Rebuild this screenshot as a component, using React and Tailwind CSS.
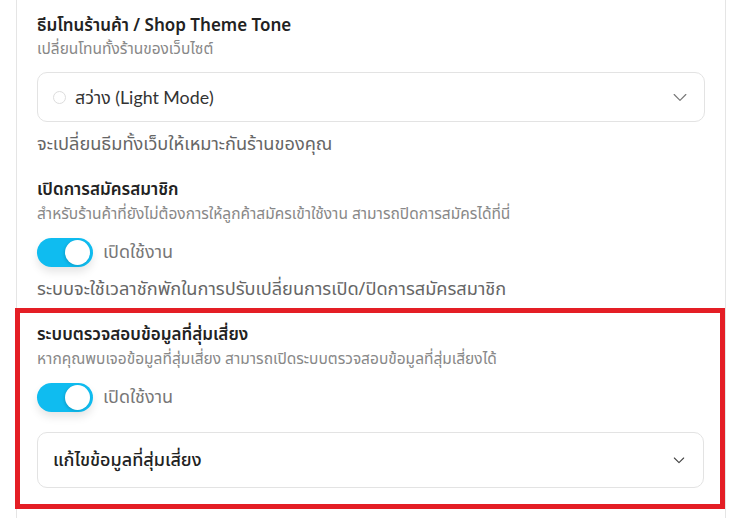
import React from "react";

function Chevron({ size = 18, color = "#777", sw = 1.4 }) {
  return (
    <svg width={size} height={size} viewBox="0 0 24 24" fill="none" stroke={color} strokeWidth={sw} strokeLinecap="round" strokeLinejoin="round">
      <path d="M5 9l7 7 7-7" />
    </svg>
  );
}

function Toggle() {
  return (
    <div className="flex items-center h-[29px]">
      <div className="w-[56px] h-[29px] rounded-full bg-[#0fbcf0] flex items-center justify-end pr-[3px] shadow-[0_5px_9px_rgba(0,0,0,0.10)]">
        <div className="w-[25px] h-[25px] rounded-full bg-white shadow-[-1px_1px_3px_rgba(0,0,0,0.15)]" />
      </div>
      <span className="ml-[10px] text-[18px] leading-6 text-[#777]">เปิดใช้งาน</span>
    </div>
  );
}

export default function App() {
  return (
    <div className="w-[743px] h-[518px] bg-white overflow-hidden" style={{ fontFamily: '"Noto Sans Thai", "Kanit", "Prompt", "Sarabun", "IBM Plex Sans Thai", "Noto Sans Thai UI", "Noto Sans", "Lato", sans-serif' }}>
      <div className="ml-[16px] w-[710px] h-[518px] border-x border-[#e5e5e5]">
        <div className="px-[20px] pt-[14px]">
          <div className="text-[17px] leading-6 font-semibold text-[#222]">ธีมโทนร้านค้า / Shop Theme Tone</div>
          <div className="mt-[2px] text-[15.5px] leading-5 text-[#888]">เปลี่ยนโทนทั้งร้านของเว็บไซต์</div>
          <div className="mt-[12px] h-[50px] rounded-[10px] border border-[#e3e3e3] flex items-center pl-[15px] pr-[14px]">
            <span className="w-[13px] h-[13px] rounded-full border border-[#ddd]" />
            <span className="ml-[9px] text-[17.8px] text-[#333]" style={{ fontFamily: '"Lato", "Noto Sans Thai", "Kanit", "Prompt", "Sarabun", "Noto Sans", sans-serif' }}>สว่าง (Light Mode)</span>
            <span className="ml-auto flex"><Chevron size={20} /></span>
          </div>
          <div className="mt-[11px] text-[18.2px] leading-6 text-[#666]">จะเปลี่ยนธีมทั้งเว็บให้เหมาะกันร้านของคุณ</div>

          <div className="mt-[21px] text-[17px] leading-6 font-semibold text-[#222]">เปิดการสมัครสมาชิก</div>
          <div className="mt-[3px] text-[15.5px] leading-5 text-[#888]">สำหรับร้านค้าที่ยังไม่ต้องการให้ลูกค้าสมัครเข้าใช้งาน สามารถปิดการสมัครได้ที่นี่</div>
          <div className="mt-[13px]"><Toggle /></div>
          <div className="mt-[11px] text-[18.2px] leading-6 text-[#666]">ระบบจะใช้เวลาชักพักในการปรับเปลี่ยนการเปิด/ปิดการสมัครสมาชิก</div>
        </div>

        <div className="mt-[6px] -ml-[2px] w-[710px] border-[5px] border-[#e41e25] pl-[17px] pr-[16px] pt-[10px] pb-[16px]">
          <div className="text-[17px] leading-6 font-semibold text-[#222]">ระบบตรวจสอบข้อมูลที่สุ่มเสี่ยง</div>
          <div className="mt-[3px] text-[15.5px] leading-5 text-[#888]">หากคุณพบเจอข้อมูลที่สุ่มเสี่ยง สามารถเปิดระบบตรวจสอบข้อมูลที่สุ่มเสี่ยงได้</div>
          <div className="mt-[13px]"><Toggle /></div>
          <div className="mt-[20px] h-[56px] rounded-[10px] border border-[#e3e3e3] flex items-center pl-[15px] pr-[16px]">
            <span className="text-[18px] font-medium text-[#222]">แก้ไขข้อมูลที่สุ่มเสี่ยง</span>
            <span className="ml-auto flex"><Chevron size={16} color="#444" sw={1.6} /></span>
          </div>
        </div>
      </div>
    </div>
  );
}
